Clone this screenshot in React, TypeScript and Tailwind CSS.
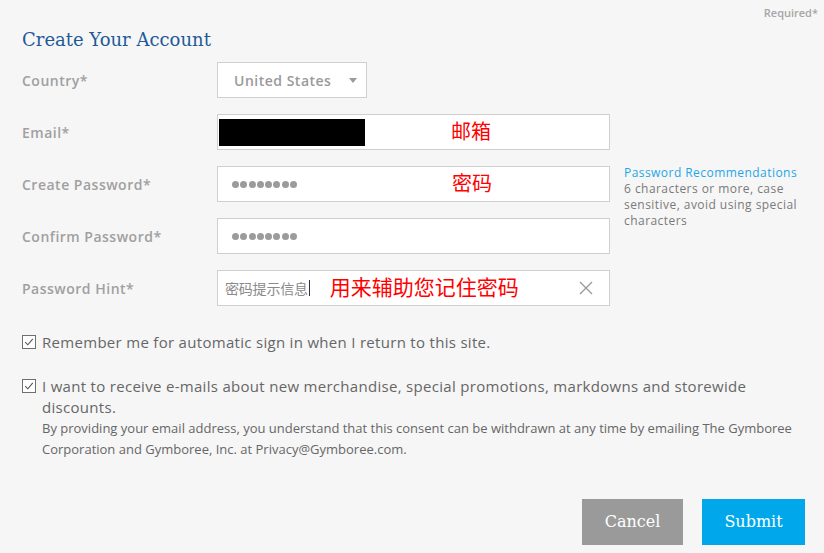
import React from "react";

const sans = { fontFamily: '"Open Sans", "Noto Sans", sans-serif' };
const cjk = { fontFamily: '"Noto Sans CJK SC", "Noto Sans", sans-serif' };
const serif = { fontFamily: '"DejaVu Serif", "Liberation Serif", serif' };

function Label({ children }: { children: React.ReactNode }) {
  return (
    <div className="w-[195px] shrink-0 text-[14px] font-semibold tracking-[0.5px] text-[#a0a0a0]" style={sans}>
      {children}
    </div>
  );
}

function Check() {
  return (
    <svg width="14" height="14" viewBox="0 0 14 14" className="shrink-0">
      <rect x="0.5" y="0.5" width="13" height="13" fill="white" stroke="#707070" />
      <path d="M3.2 7.2 L5.8 9.8 L10.8 3.8" fill="none" stroke="#555" strokeWidth="1.1" />
    </svg>
  );
}

function Dots() {
  return (
    <div className="flex gap-[1.3px] items-center">
      {Array.from({ length: 8 }).map((_, i) => (
        <span key={i} className="block w-[7px] h-[7px] rounded-full bg-[#9b9b9b]" />
      ))}
    </div>
  );
}

export default function App() {
  return (
    <div className="w-[824px] h-[553px] bg-[#f6f6f6] relative overflow-hidden" style={sans}>
      <div className="flex justify-end pr-[6px] pt-[6px] text-[11px] font-semibold text-[#a6a6a6] leading-[14px]">
        Required*
      </div>
      <div className="pl-[22px]">
        <h1 className="text-[18px] text-[#1e5a98] leading-[24px] mt-[8px]" style={serif}>
          Create Your Account
        </h1>

        <div className="mt-[10px] flex flex-col gap-[16px]">
          <div className="flex items-center h-[36px]">
            <Label>Country*</Label>
            <div className="w-[150px] h-[36px] bg-white border border-[#cfcfcf] flex items-center justify-between pl-[16px] pr-[9px]">
              <span className="text-[14px] font-semibold tracking-[0.5px] text-[#9a9a9a]">United States</span>
              <svg width="8" height="5" viewBox="0 0 8 5">
                <path d="M0 0 H8 L4 5 Z" fill="#9a9a9a" />
              </svg>
            </div>
          </div>

          <div className="flex items-center h-[36px]">
            <Label>Email*</Label>
            <div className="w-[393px] h-[36px] bg-white border border-[#cfcfcf] flex items-center pl-[1px] relative">
              <div className="w-[146px] h-[27px] bg-black" />
              <span className="ml-[86px] text-[20px] text-[#f00] -mt-[2px]" style={cjk}>邮箱</span>
            </div>
          </div>

          <div className="flex items-center h-[36px] relative">
            <Label>Create Password*</Label>
            <div className="w-[393px] h-[36px] bg-white border border-[#cfcfcf] flex items-center pl-[14px]">
              <Dots />
              <span className="ml-[155px] text-[20px] text-[#f00] -mt-[2px]" style={cjk}>密码</span>
            </div>
            <div className="absolute left-[602px] top-[-1px] w-[196px] text-[12px] leading-[16px] tracking-[0.45px]">
              <div className="text-[#1ea7e4]">Password Recommendations</div>
              <div className="text-[#7a7a7a]">
                6 characters or more, case sensitive, avoid using special characters
              </div>
            </div>
          </div>

          <div className="flex items-center h-[36px]">
            <Label>Confirm Password*</Label>
            <div className="w-[393px] h-[36px] bg-white border border-[#cfcfcf] flex items-center pl-[14px]">
              <Dots />
            </div>
          </div>

          <div className="flex items-center h-[36px]">
            <Label>Password Hint*</Label>
            <div className="w-[393px] h-[36px] bg-white border border-[#cfcfcf] flex items-center pl-[7px] pr-[16px]">
              <span className="text-[14px] tracking-[-0.2px] text-[#8a8a8a]" style={cjk}>密码提示信息</span>
              <span className="w-[1px] h-[16px] bg-[#333] ml-[1px]" />
              <span className="ml-[20px] text-[21px] text-[#f00] -mt-[2px]" style={cjk}>用来辅助您记住密码</span>
              <svg width="14" height="14" viewBox="0 0 14 14" className="ml-auto">
                <path d="M1 1 L13 13 M13 1 L1 13" stroke="#9a9a9a" strokeWidth="1.4" />
              </svg>
            </div>
          </div>
        </div>

        <div className="mt-[26px] flex items-center gap-[6px]">
          <Check />
          <span className="text-[15px] tracking-[0.3px] text-[#666] leading-[20px]">
            Remember me for automatic sign in when I return to this site.
          </span>
        </div>

        <div className="mt-[24px] flex items-start gap-[6px]">
          <div className="pt-[3px]">
            <Check />
          </div>
          <div className="w-[770px]">
            <div className="text-[15px] tracking-[0.3px] text-[#666] leading-[21px]">
              I want to receive e-mails about new merchandise, special promotions, markdowns and storewide
              <br />
              discounts.
            </div>
            <div className="text-[13px] text-[#666] leading-[21px]">
              By providing your email address, you understand that this consent can be withdrawn at any time by emailing The Gymboree
              <br />
              Corporation and Gymboree, Inc. at Privacy@Gymboree.com.
            </div>
          </div>
        </div>
      </div>

      <div className="absolute left-0 right-[19px] top-[499px] flex justify-end gap-[19px]">
        <button className="w-[101px] h-[46px] bg-[#9a9a9a] text-white text-[16px]" style={serif}>
          Cancel
        </button>
        <button className="w-[103px] h-[46px] bg-[#00a8eb] text-white text-[16px]" style={serif}>
          Submit
        </button>
      </div>
    </div>
  );
}
